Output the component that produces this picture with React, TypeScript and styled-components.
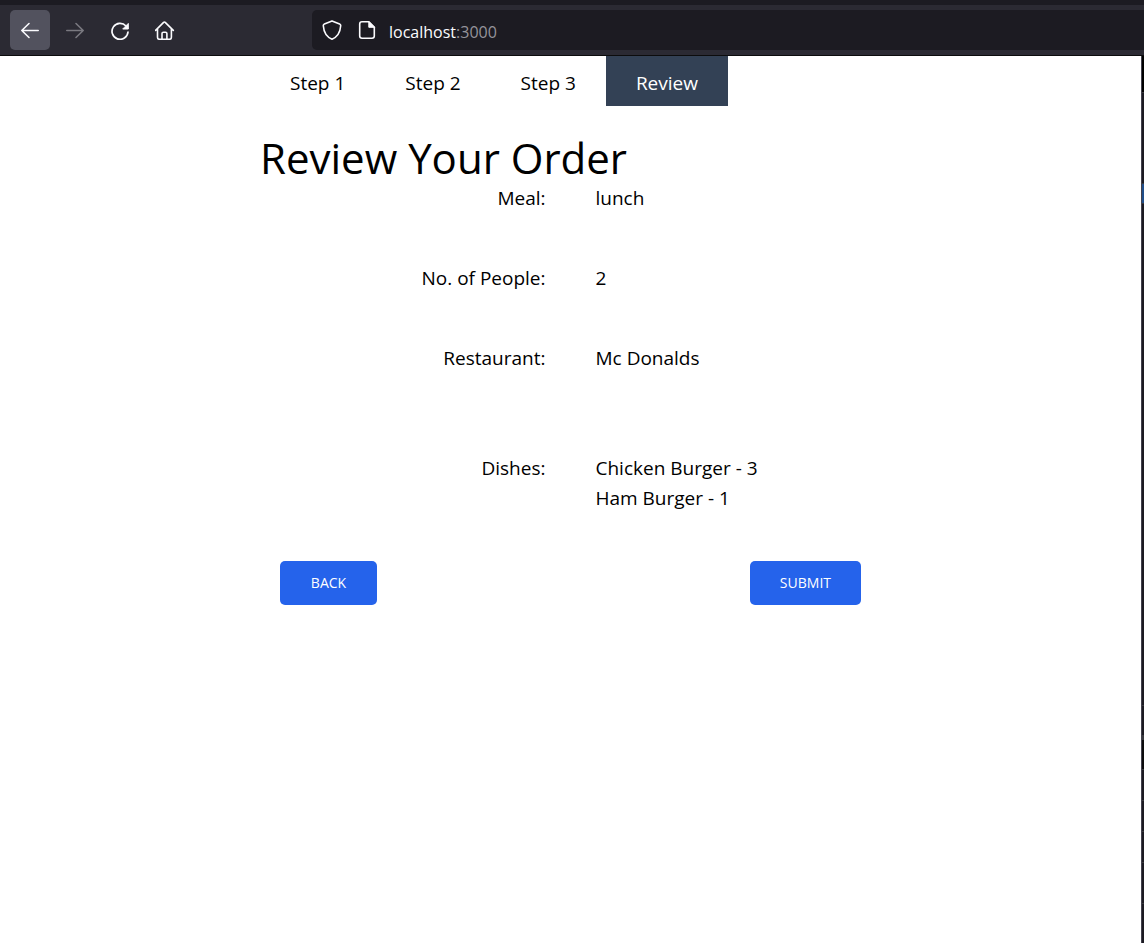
import React from "react";
import styled, { createGlobalStyle } from "styled-components";

const GlobalStyle = createGlobalStyle`
  *, *::before, *::after { box-sizing: border-box; }
  html, body, #root { height: 100%; }
  body {
    margin: 0;
    background: #fff;
    color: #000;
    font-family: "Segoe UI", "Open Sans", "Noto Sans", sans-serif;
    font-size: 19px;
    line-height: 30px;
  }
`;

const Shell = styled.div`
  display: flex;
  flex-direction: column;
  min-height: 100%;
`;

const Chrome = styled.header`
  display: flex;
  align-items: center;
  border-top: 5px solid #1c1b22;
  border-bottom: 1px solid #0c0c0d;
  background: #2b2a33;
  height: 56px;
  padding-left: 10px;
`;

const ToolGroup = styled.div`
  display: flex;
  gap: 5px;
  width: 302px;
`;

const ToolButton = styled.button<{ $active?: boolean }>`
  display: grid;
  place-items: center;
  width: 40px;
  height: 40px;
  padding: 0;
  border: 0;
  border-radius: 5px;
  color: #fbfbfe;
  background: ${(p) => (p.$active ? "#52525e" : "transparent")};
  &:disabled { color: #7a7980; }
`;

const Icon = styled.svg`
  display: block;
  width: 20px;
  height: 20px;
  fill: none;
  stroke: currentColor;
  stroke-width: 1.6;
  stroke-linecap: round;
  stroke-linejoin: round;
`;

const AddressBar = styled.div`
  display: flex;
  flex: 1;
  align-items: center;
  gap: 12px;
  height: 40px;
  padding-left: 10px;
  border-radius: 5px 0 0 5px;
  background: #1c1b22;
  color: #fbfbfe;
`;

const SiteIcons = styled.div`
  display: flex;
  gap: 15px;
`;

const Address = styled.span`
  padding-top: 4px;
  font-size: 16px;
  line-height: 24px;
`;

const Port = styled.span`
  color: #95949b;
`;

const Viewport = styled.div`
  display: flex;
  flex: 1;
`;

const Page = styled.main`
  flex: 1;
`;

const Content = styled.div`
  max-width: 621px;
  margin: 0 auto;
`;

const Tabs = styled.nav`
  display: flex;
`;

const Tab = styled.a<{ $active?: boolean }>`
  display: block;
  padding: 12px 30px 8px;
  text-decoration: none;
  color: ${(p) => (p.$active ? "#fff" : "#000")};
  background: ${(p) => (p.$active ? "#334155" : "transparent")};
`;

const Title = styled.h1`
  margin: 27px 0 0;
  font-size: 42px;
  font-weight: 400;
  line-height: 50px;
`;

const Summary = styled.dl`
  display: flex;
  flex-direction: column;
  gap: 50px;
  margin: 0;
`;

const Field = styled.div<{ $spaced?: boolean }>`
  display: grid;
  grid-template-columns: 1fr 1fr;
  column-gap: 50px;
  margin-top: ${(p) => (p.$spaced ? "30px" : "0")};
`;

const Label = styled.dt`
  text-align: right;
`;

const Value = styled.dd`
  grid-column: 2;
  margin: 0;
`;

const Actions = styled.div`
  display: flex;
  justify-content: space-between;
  margin-top: 48px;
  padding: 0 20px;
`;

const Action = styled.button`
  min-width: 97px;
  padding: 12px 30px;
  border: 0;
  border-radius: 5px;
  background: #2563eb;
  color: #fff;
  font: inherit;
  font-size: 14px;
  line-height: 20px;
`;

const SidePanel = styled.aside`
  display: flex;
  flex-direction: column;
  width: 3px;
  border-left: 1px solid #42414d;
  background: #1c1b22;
`;

const PanelRow = styled.div<{ $height: number; $tone?: string }>`
  height: ${(p) => p.$height}px;
  border-bottom: 1px solid #38383d;
  background: ${(p) => p.$tone ?? "#1c1b22"};
`;

const tabs = ["Step 1", "Step 2", "Step 3", "Review"];

const fields = [
  { label: "Meal:", values: ["lunch"] },
  { label: "No. of People:", values: ["2"] },
  { label: "Restaurant:", values: ["Mc Donalds"] },
  { label: "Dishes:", values: ["Chicken Burger - 3", "Ham Burger - 1"], spaced: true },
];

const panelRows = [
  { height: 37, tone: "#000" },
  { height: 91 },
  { height: 20, tone: "#204e8a" },
  { height: 502 },
  { height: 30 },
  { height: 4, tone: "#38383d" },
  { height: 30, tone: "#0c0c0d" },
  { height: 31 },
  { height: 31 },
  { height: 31 },
  { height: 41 },
];

export default function App() {
  return (
    <Shell>
      <GlobalStyle />
      <Chrome>
        <ToolGroup>
          <ToolButton $active aria-label="Back">
            <Icon viewBox="0 0 20 20"><path d="M18.2 10.5H1.8M9 3.5l-7.2 7 7.2 7" /></Icon>
          </ToolButton>
          <ToolButton disabled aria-label="Forward">
            <Icon viewBox="0 0 20 20"><path d="M1.8 10.5h16.4M11 3.5l7.2 7-7.2 7" /></Icon>
          </ToolButton>
          <ToolButton aria-label="Reload">
            <Icon viewBox="0 0 20 20">
              <path d="M16 6A8 8 0 1 0 18 12" strokeWidth="1.7" />
              <path d="M18.3 3.8v5.2h-5.2z" fill="currentColor" strokeWidth="1" />
            </Icon>
          </ToolButton>
          <ToolButton aria-label="Home">
            <Icon viewBox="0 0 20 20">
              <path d="M.6 10.400 8.600 2.400q.8-.8 1.600 0l8.100 8M2.500 8.700v8.500q0 2.100 2.100 2.100h9.700q2.100 0 2.100-2.100V8.700M7 19v-5.400q0-1.400 1.400-1.400h2.100q1.400 0 1.400 1.400V19" />
            </Icon>
          </ToolButton>
        </ToolGroup>
        <AddressBar>
          <SiteIcons>
            <Icon viewBox="0 0 20 20">
              <path d="M10 .9 17.600 4q1.200.5 1.100 1.800C18.200 12.500 15.400 17 10 19.200 4.600 17 1.800 12.500 1.300 5.800Q1.200 4.500 2.400 4z" />
            </Icon>
            <Icon viewBox="0 0 20 20">
              <path d="M11.800 1.800H5Q2.700 1.800 2.700 4v12Q2.700 18.200 5 18.200h10q2.300 0 2.300-2.200V7.300z" />
              <path d="M11.800 1.800v5.500h5.500z" fill="currentColor" strokeWidth="1" />
            </Icon>
          </SiteIcons>
          <Address>localhost<Port>:3000</Port></Address>
        </AddressBar>
      </Chrome>
      <Viewport>
        <Page>
          <Content>
            <Tabs>
              {tabs.map((name) => (
                <Tab key={name} href="#" $active={name === "Review"}>{name}</Tab>
              ))}
            </Tabs>
            <Title>Review Your Order</Title>
            <Summary>
              {fields.map((field) => (
                <Field key={field.label} $spaced={field.spaced}>
                  <Label>{field.label}</Label>
                  {field.values.map((value) => (
                    <Value key={value}>{value}</Value>
                  ))}
                </Field>
              ))}
            </Summary>
            <Actions>
              <Action type="button">BACK</Action>
              <Action type="submit">SUBMIT</Action>
            </Actions>
          </Content>
        </Page>
        <SidePanel>
          {panelRows.map((row, index) => (
            <PanelRow key={index} $height={row.height} $tone={row.tone} />
          ))}
        </SidePanel>
      </Viewport>
    </Shell>
  );
}
